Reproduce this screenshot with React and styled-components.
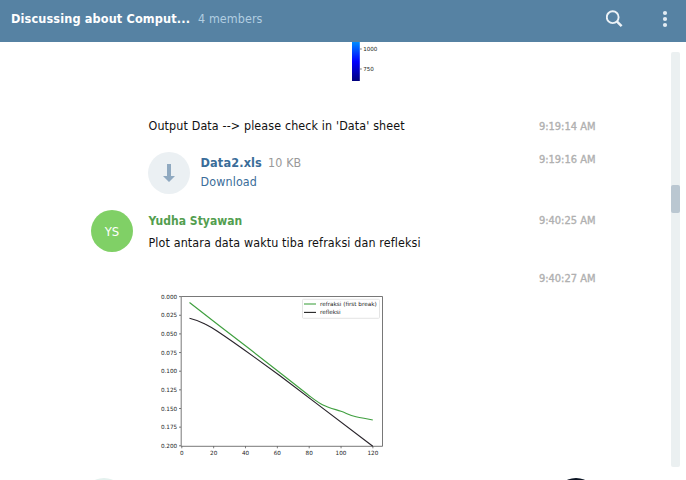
import React from "react";
import styled, { createGlobalStyle } from "styled-components";

const GlobalStyle = createGlobalStyle`
  * { box-sizing: border-box; }
  body {
    margin: 0;
    background: #fff;
    font-family: "DejaVu Sans Condensed", "DejaVu Sans", sans-serif;
    font-stretch: condensed;
    font-size: 12.4px;
    color: #111;
  }
`;

const Page = styled.div`
  display: flex;
  flex-direction: column;
  width: 686px;
  height: 480px;
  overflow: hidden;
`;

const Header = styled.header`
  display: flex;
  align-items: center;
  flex: 0 0 42px;
  padding: 0 15px 4px 11px;
  background: #5682a3;
`;

const Title = styled.h1`
  margin: 0 8px 0 0;
  font-size: 12.6px;
  line-height: 18px;
  font-weight: 700;
  color: #fff;
  white-space: nowrap;
  letter-spacing: 0.13px;
`;

const Members = styled.span`
  flex: 1;
  line-height: 18px;
  color: #b2cee1;
  letter-spacing: 0.1px;
`;

const HeaderIcon = styled.svg`
  display: block;
  flex: none;
  margin-left: ${(p) => p.$gap || 0}px;
`;

const Body = styled.main`
  display: flex;
  justify-content: space-between;
  flex: 1;
  min-height: 0;
  padding-right: 6px;
`;

const History = styled.section`
  display: flex;
  flex-direction: column;
  width: 597px;
  padding-left: 83px;
`;

const ScaleBar = styled.svg`
  display: block;
  flex: none;
  margin: 0 0 36px 265px;
  font-family: "DejaVu Sans", sans-serif;
  font-stretch: normal;
  font-size: 5.6px;
  fill: #222;
`;

const Message = styled.article`
  display: grid;
  grid-template-columns: 42px 1fr auto;
  column-gap: 15px;
  flex: none;
  height: ${(p) => p.$height}px;
  padding: 0 1.5px 0 8px;
  align-items: start;
`;

const Content = styled.div`
  grid-column: 2;
  min-width: 0;
`;

const Avatar = styled.div`
  display: grid;
  place-items: center;
  width: 42px;
  height: 42px;
  border-radius: 50%;
  background: ${(p) => p.$color};
  color: #fff;
  font-size: 13px;
  padding-top: 1px;
`;

const Author = styled.div`
  line-height: 18px;
  margin: 2px 0 4px;
  padding-left: 0.5px;
  font-size: 12px;
  font-weight: 700;
  color: #539e4f;
  letter-spacing: 0.04px;
`;

const Text = styled.p`
  margin: 0;
  padding-left: 0.5px;
  line-height: 18px;
  white-space: nowrap;
  letter-spacing: 0.13px;
`;

const Time = styled.time`
  grid-column: 3;
  margin-top: ${(p) => p.$top || 0}px;
  font-size: 11px;
  line-height: 18px;
  color: #b0b0b0;
  -webkit-text-stroke: 0.35px #b0b0b0;
`;

const Document = styled.div`
  display: flex;
  gap: 10px;
`;

const FileButton = styled.div`
  display: grid;
  place-items: center;
  width: 42px;
  height: 42px;
  border-radius: 50%;
  background: #ebf0f3;
`;

const FileInfo = styled.div`
  padding: 1px 0 0 0.5px;
  line-height: 19px;
  letter-spacing: 0.14px;
`;

const FileName = styled.span`
  margin-right: 6px;
  font-size: 12.6px;
  font-weight: 700;
  color: #3a6d99;
`;

const FileSize = styled.span`
  color: #999;
`;

const Download = styled.a`
  display: block;
  color: #3a6d99;
`;

const ChartSvg = styled.svg`
  display: block;
  flex: none;
  margin: 0 0 15px 65px;
  font-family: "DejaVu Sans", sans-serif;
  font-stretch: normal;
  font-size: 5.7px;
  fill: #222;
`;

const NextRow = styled.div`
  display: flex;
  justify-content: space-between;
`;

const Track = styled.div`
  width: 9px;
  height: 415px;
  margin-top: 10px;
  padding-top: 133px;
  border-radius: 2px;
  background: #ebf0f1;
`;

const Thumb = styled.div`
  height: 28px;
  border-radius: 2px;
  background: #bac7d1;
`;

const yTicks = ["0.000", "0.025", "0.050", "0.075", "0.100", "0.125", "0.150", "0.175", "0.200"];
const xTicks = [0, 20, 40, 60, 80, 100, 120];

function Chart() {
  return (
    <ChartSvg width="240" height="173" viewBox="148 290 240 173">
      <path d="M181.2 296.5H382.5V446.3H181.2Z" fill="none" stroke="#555" strokeWidth="0.8" />
      {yTicks.map((t, i) => (
        <g key={t}>
          <path d={`M179 ${296.6 + i * 18.65}h2`} stroke="#444" strokeWidth="0.7" />
          <text x="177.2" y={298.6 + i * 18.65} textAnchor="end">{t}</text>
        </g>
      ))}
      {xTicks.map((t, i) => (
        <g key={t}>
          <path d={`M${181.8 + i * 31.85} 446.3v2`} stroke="#444" strokeWidth="0.7" />
          <text x={181.8 + i * 31.85} y="455" textAnchor="middle">{t}</text>
        </g>
      ))}
      <path
        d="M189.5 318.2C195 319.5 200 321.3 205 324C209 326 213 328.3 217 331C229 339 241 347.5 253.3 356.4L280 375.7L318 404.6L372.8 446.2"
        fill="none" stroke="#29242b" strokeWidth="1.15"
      />
      <path
        d="M189.5 302.5L220 326.2L250 349.3L280 372.8L308 394.8C314 399.3 318 402.6 323 405C329 408 335 409.3 341 411.3C346 413 350 415.5 356 416.8C362 418.2 367 418.5 372.8 420"
        fill="none" stroke="#3f9f3f" strokeWidth="1.15"
      />
      <rect x="302.5" y="299.3" width="77" height="19" rx="1" fill="#fff" stroke="#ddd" strokeWidth="0.8" />
      <path d="M304 304h12" stroke="#46a546" strokeWidth="1.1" />
      <path d="M304 312.4h12" stroke="#222" strokeWidth="1.1" />
      <text x="320" y="306">refraksi (first break)</text>
      <text x="320" y="314.4">refleksi</text>
    </ChartSvg>
  );
}

export default function App() {
  return (
    <Page>
      <GlobalStyle />
      <Header>
        <Title>Discussing about Comput...</Title>
        <Members>4 members</Members>
        <HeaderIcon width="18" height="18" viewBox="0 0 18 18" fill="none" stroke="#edf3f7">
          <circle cx="6.7" cy="7.2" r="5.9" strokeWidth="1.9" />
          <path d="M10.8 11.3L15.6 16.1" strokeWidth="2.5" />
        </HeaderIcon>
        <HeaderIcon $gap={35} width="12" height="18" viewBox="0 0 12 18" fill="#e3ecf3">
          <circle cx="6" cy="3" r="2.1" />
          <circle cx="6" cy="9" r="2.1" />
          <circle cx="6" cy="15" r="2.1" />
        </HeaderIcon>
      </Header>
      <Body>
        <History>
          <ScaleBar width="40" height="39" viewBox="0 0 40 39">
            <defs>
              <linearGradient id="depth" x1="0" y1="0" x2="0" y2="1">
                <stop offset="0" stopColor="#008cff" />
                <stop offset="0.5" stopColor="#0000ff" />
                <stop offset="1" stopColor="#00007c" />
              </linearGradient>
            </defs>
            <rect x="4" width="7.8" height="39" fill="url(#depth)" />
            <path d="M12 7h1.8M12 27h1.8" stroke="#444" strokeWidth="0.7" />
            <text x="15.2" y="9.2">1000</text>
            <text x="15.2" y="29.2">750</text>
          </ScaleBar>
          <Message $height={35}>
            <Content><Text>Output Data --&gt; please check in 'Data' sheet</Text></Content>
            <Time $top={1}>9:19:14 AM</Time>
          </Message>
          <Message $height={58}>
            <Content>
              <Document>
                <FileButton>
                  <svg width="12" height="18" viewBox="0 0 12 18" fill="#8fa9c0">
                    <path d="M4 0H8V12H12L6 18L0 12H4Z" />
                  </svg>
                </FileButton>
                <FileInfo>
                  <FileName>Data2.xls</FileName>
                  <FileSize>10 KB</FileSize>
                  <Download>Download</Download>
                </FileInfo>
              </Document>
            </Content>
            <Time $top={-1}>9:19:16 AM</Time>
          </Message>
          <Message $height={59}>
            <Avatar $color="#80d066">YS</Avatar>
            <Content>
              <Author>Yudha Styawan</Author>
              <Text>Plot antara data waktu tiba refraksi dan refleksi</Text>
            </Content>
            <Time $top={2}>9:40:25 AM</Time>
          </Message>
          <Message $height={21}>
            <Time $top={1}>9:40:27 AM</Time>
          </Message>
          <Chart />
          <NextRow>
            <Avatar $color="#e4f1ee" />
            <Avatar $color="#0b1423" />
          </NextRow>
        </History>
        <Track><Thumb /></Track>
      </Body>
    </Page>
  );
}
